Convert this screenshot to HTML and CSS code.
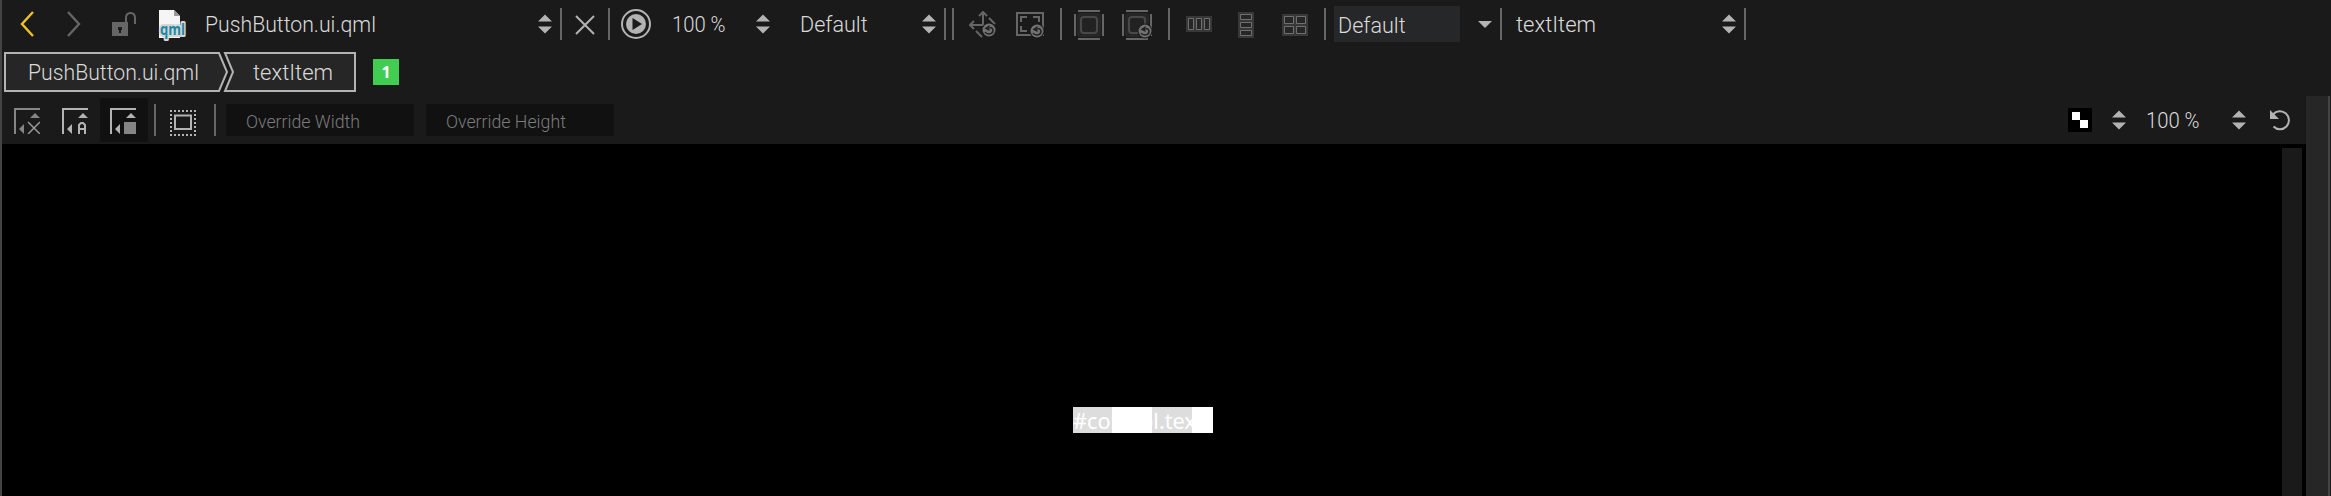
FILE: index.html
```html
<!DOCTYPE html>
<html lang="en">
<head>
<meta charset="utf-8">
<title>Form Editor</title>
<link rel="stylesheet" href="styles.css">
</head>
<body>
<svg width="0" height="0" class="defs">
  <defs>
    <symbol id="spin" viewBox="0 0 14 20"><path d="M0 7.500 7 .5 14 7.500ZM0 12.500 7 19.500 14 12.500Z" fill="#b3b3b3"/></symbol>
    <symbol id="reset" viewBox="0 0 16 16"><circle cx="8" cy="8" r="7.500" fill="#1a1a1a"/><circle cx="8" cy="8" r="6.500" fill="#727272"/><path d="M8.500 5.500Q12 5.500 12 8.500T8 12Q5 12 4 10" fill="none" stroke="#222" stroke-width="1.600"/><path d="M3.500 6.500 8.500 3V9Z" fill="#222"/></symbol>
  </defs>
</svg>
<div class="window">
  <header class="toolbar">
    <svg class="icon back" width="16" height="28"><path d="M14 2 3 14 14 26" fill="none" stroke="#f0c41b" stroke-width="2.400"/></svg>
    <svg class="icon forward" width="16" height="28"><path d="M2 2 13 14 2 26" fill="none" stroke="#666" stroke-width="2.400"/></svg>
    <svg class="icon lock" width="24" height="24"><path d="M0 10H16V24H0Z" fill="#666"/><path d="M14 11V6Q14 1 18.500 1T23 6V12" fill="none" stroke="#666" stroke-width="2"/><path d="M6 15H10V18H9V21H7V18H6Z" fill="#1a1a1a"/></svg>
    <svg class="icon file" width="30" height="32"><path d="M1 1H16L22 7V29H1Z" fill="#f5f5f5"/><path d="M16 1V7H22Z" fill="#999"/><text class="qml-mark" x="2" y="26" textLength="25" lengthAdjust="spacingAndGlyphs">qml</text></svg>
    <span class="label file-name"><span class="fit t-file">PushButton.ui.qml</span></span>
    <svg class="spin s1"><use href="#spin"/></svg>
    <i class="sep p1"></i>
    <svg class="icon close" width="20" height="20"><path d="M1 1 19 19M19 1 1 19" stroke="#b3b3b3" stroke-width="2"/></svg>
    <i class="sep p2"></i>
    <svg class="icon play" width="32" height="32"><circle cx="16" cy="16" r="14" fill="none" stroke="#b3b3b3" stroke-width="2"/><circle cx="16" cy="16" r="10" fill="#b3b3b3"/><path d="M12.500 10V22L22 16Z" fill="#1a1a1a"/></svg>
    <span class="label zoom"><span class="fit t-zoom">100 %</span></span>
    <svg class="spin s2"><use href="#spin"/></svg>
    <span class="label style"><span class="fit t-default">Default</span></span>
    <svg class="spin s3"><use href="#spin"/></svg>
    <i class="sep p3"></i><i class="sep p4"></i>
    <svg class="icon move" width="28" height="28"><g fill="none" stroke="#666" stroke-width="2"><path d="M1 14H14V1M5 10 1 14 5 18M10 5 14 1 18 5M20 7 26 13M7 20 13 26"/></g><use href="#reset" x="12" y="11" width="16" height="16"/></svg>
    <svg class="icon frame" width="28" height="28"><path d="M1 1H27V23H1Z" fill="none" stroke="#666" stroke-width="2"/><path d="M5 10V5H11M17 5H23V10M5 14V19H11" fill="none" stroke="#666" stroke-width="2"/><use href="#reset" x="13" y="11" width="16" height="16"/></svg>
    <i class="sep p5"></i>
    <svg class="icon snap" width="30" height="30"><rect x="3" y="3" width="24" height="24" rx="3" fill="#262626"/><rect x="7" y="7" width="16" height="16" rx="3" fill="#222" stroke="#484848" stroke-width="2"/><path d="M4 1H26M4 29H26M1 4V26M29 4V26" stroke="#666" stroke-width="2"/></svg>
    <svg class="icon snap-reset" width="30" height="30"><rect x="3" y="3" width="24" height="24" rx="3" fill="#262626"/><rect x="7" y="7" width="16" height="16" rx="3" fill="#222" stroke="#484848" stroke-width="2"/><path d="M4 1H26M4 29H26M1 4V26M29 4V26" stroke="#666" stroke-width="2"/><use href="#reset" x="15" y="13" width="16" height="16"/></svg>
    <i class="sep p6"></i>
    <svg class="icon row" width="26" height="16"><path d="M0 0H26V16H0Z" fill="#383838"/><path d="M2.500 2.500H7.500V13.500H2.500ZM10.500 2.500H15.500V13.500H10.500ZM18.500 2.500H23.500V13.500H18.500Z" fill="#262626" stroke="#707070"/></svg>
    <svg class="icon column" width="16" height="26"><path d="M0 0H16V26H0Z" fill="#383838"/><path d="M2.500 2.500H13.500V7.500H2.500ZM2.500 10.500H13.500V15.500H2.500ZM2.500 18.500H13.500V23.500H2.500Z" fill="#262626" stroke="#707070"/></svg>
    <svg class="icon grid" width="26" height="22"><path d="M0 0H26V22H0Z" fill="#383838"/><path d="M2.500 2.500H11.500V9.500H2.500ZM14.500 2.500H23.500V9.500H14.500ZM2.500 12.500H11.500V19.500H2.500ZM14.500 12.500H23.500V19.500H14.500Z" fill="#262626" stroke="#707070"/></svg>
    <i class="sep p7"></i>
    <span class="label combo"><span class="fit t-default">Default</span></span>
    <svg class="icon drop" width="14" height="8"><path d="M0 0H14L7 7Z" fill="#b3b3b3"/></svg>
    <i class="sep p8"></i>
    <span class="label item"><span class="fit t-item">textItem</span></span>
    <svg class="spin s4"><use href="#spin"/></svg>
    <i class="sep p9"></i>
  </header>
  <nav class="crumbs">
    <div class="trail">
      <svg class="outline" width="352" height="40"><g fill="#262626" stroke="#b3b3b3" stroke-width="2"><path d="M1 1H215L223 20 215 39H1Z"/><path d="M221 1H351V39H221L229 20Z"/></g></svg>
      <span class="label crumb-file"><span class="fit t-file">PushButton.ui.qml</span></span>
      <span class="label crumb-item"><span class="fit t-item">textItem</span></span>
    </div>
    <span class="badge">1</span>
  </nav>
  <div class="lower">
    <main class="editor">
      <div class="tools">
        <svg class="icon anchor" width="26" height="26"><path d="M0 0H26V2H2V26H0ZM16 10 21 5 26 10ZM10 16V26L5 21Z" fill="#858585"/><path d="M14 14 26 26M26 14 14 26" stroke="#999" stroke-width="1.500"/></svg>
        <svg class="icon anchor second" width="26" height="26"><path d="M0 0H26V2H2V26H0ZM16 10 21 5 26 10ZM10 16V26L5 21Z" fill="#b3b3b3"/><path d="M17 26V17L19 15H21L23 17V26M17 21H23" fill="none" stroke="#b3b3b3" stroke-width="2"/></svg>
        <span class="selected"><svg width="26" height="26"><path d="M0 0H26V2H2V26H0ZM16 10 21 5 26 10ZM10 16V26L5 21Z" fill="#b3b3b3"/><path d="M14 14H26V26H14Z" fill="#858585"/></svg></span>
        <i class="sep q1"></i>
        <svg class="icon bounds" width="26" height="26"><path d="M0 1H26M0 25H26" stroke="#b3b3b3" stroke-width="2" stroke-dasharray="2"/><path d="M1 0V26M25 0V26" stroke="#b3b3b3" stroke-width="2" stroke-dasharray="2"/><path d="M5 5.500H21V19H5Z" fill="none" stroke="#b3b3b3" stroke-width="2"/></svg>
        <i class="sep q2"></i>
        <span class="field width"><span class="fit t-hint">Override Width</span></span>
        <span class="field height"><span class="fit t-hint">Override Height</span></span>
        <span class="spacer"></span>
        <svg class="icon checker" width="24" height="24"><path d="M0 0H24V24H0Z"/><path d="M4 4H12V12H20V20H12V12H4Z" fill="#fff"/></svg>
        <svg class="spin s5"><use href="#spin"/></svg>
        <span class="label canvas-zoom"><span class="fit t-zoom">100 %</span></span>
        <svg class="spin s6"><use href="#spin"/></svg>
        <svg class="icon undo" width="22" height="22"><path d="M4 5.500A9 9 0 1 1 4.500 17.500" fill="none" stroke="#b3b3b3" stroke-width="2"/><path d="M1 1V10H10Z" fill="#b3b3b3"/></svg>
      </div>
      <div class="canvas">
        <div class="stage"><div class="text-item"><span class="fit t-control">#control.text</span></div></div>
        <div class="scrollbar"></div>
      </div>
    </main>
    <aside class="gutter"></aside>
  </div>
</div>
</body>
</html>
```
FILE: styles.css
```css
* { box-sizing: border-box; }
body { margin: 0; background: #1a1a1a; color: #dadada; font: 300 22px/28px Roboto, sans-serif; }
svg { display: block; }
.defs { position: absolute; }
.window { height: 496px; display: flex; flex-direction: column; border-left: 2px solid #444; border-right: 1px solid #1a1a1a; overflow: hidden; }
.toolbar { height: 50px; display: flex; align-items: flex-start; flex: none; }
.toolbar > *, .tools > * { flex: none; }
.label { white-space: nowrap; display: block; }
.fit { display: inline-block; white-space: nowrap; transform-origin: 0 50%; }
.t-file { transform: scaleX(.965); }
.t-zoom { transform: scaleX(.92); }
.t-default { transform: scaleX(.98); }
.t-hint { transform: scaleX(.985); }
.t-control { transform: scaleX(.985); }
.sep { width: 2px; height: 32px; margin-top: 8px; background: #666; }
.spin { width: 14px; height: 20px; margin-top: 14px; }

.back { margin: 10px 0 0 17px; }
.forward { margin: 10px 0 0 31px; }
.lock { margin: 12px 0 0 30px; }
.file { margin: 9px 0 0 22px; overflow: visible; }
.qml-mark { font: 700 16px "Open Sans", sans-serif; fill: #1b8aa5; stroke: #d5d5d5; stroke-width: 4px; paint-order: stroke; stroke-linejoin: round; }
.file-name { width: 333px; margin: 11px 0 0 17px; }
.p1 { margin-left: 8px; }
.close { margin: 15px 0 0 13px; }
.p2 { margin-left: 13px; }
.play { margin: 8px 0 0 10px; }
.zoom { width: 84px; margin: 11px 0 0 20px; }
.style { width: 122px; margin: 11px 0 0 30px; }
.p3 { margin-left: 8px; }
.p4 { margin-left: 6px; }
.move { margin: 11px 0 0 15px; }
.frame { margin: 12px 0 0 19px; overflow: visible; }
.p5 { margin-left: 16px; }
.snap { margin: 10px 0 0 12px; }
.snap-reset { margin: 10px 0 0 18px; overflow: visible; }
.p6 { margin-left: 16px; }
.row { margin: 16px 0 0 16px; }
.column { margin: 12px 0 0 26px; }
.grid { margin: 14px 0 0 28px; }
.p7 { margin-left: 16px; }
.combo { width: 126px; height: 36px; margin: 6px 0 0 8px; padding: 6px 0 0 4px; background: #262729; }
.drop { margin: 21px 0 0 18px; }
.p8 { margin-left: 8px; }
.item { width: 206px; margin: 11px 0 0 14px; }
.p9 { margin-left: 8px; }

.crumbs { height: 46px; display: flex; align-items: flex-start; flex: none; }
.trail { position: relative; width: 352px; height: 40px; margin: 2px 0 0 2px; display: flex; }
.outline { position: absolute; inset: 0; }
.trail .label { position: relative; margin-top: 7px; }
.crumb-file { width: 224px; padding-left: 24px; }
.crumb-item { padding-left: 25px; }
.badge { width: 26px; height: 26px; margin: 9px 0 0 17px; background: #41cd52; color: #fff; font: 700 16px/26px "Open Sans", sans-serif; text-align: center; }

.lower { flex: 1; min-height: 0; display: flex; }
.editor { flex: 1; display: flex; flex-direction: column; }
.tools { height: 48px; flex: none; display: flex; align-items: flex-start; }
.anchor { margin: 12px 0 0 12px; }
.anchor.second { margin-left: 22px; }
.selected { width: 48px; height: 44px; margin: 2px 0 0 12px; padding: 10px; background: #111; }
.q1 { margin-left: 6px; }
.bounds { margin: 14px 0 0 14px; }
.q2 { margin-left: 18px; }
.field { height: 32px; margin-top: 8px; padding: 0 20px; background: #111; color: #7c7c7c; font-size: 18px; line-height: 36px; }
.width { width: 188px; margin-left: 10px; }
.height { width: 188px; margin-left: 12px; }
.tools > .spacer { flex: 1; }
.checker { margin: 12px 20px 0 0; }
.canvas-zoom { width: 84px; margin: 11px 0 0 20px; }
.s6 { margin-left: 2px; }
.undo { margin: 13px 15px 0 23px; }
.canvas { flex: 1; display: flex; background: #000; }
.stage { flex: 1; padding: 263px 0 0 1071px; }
.text-item { width: 140px; height: 26px; color: #fff; font: 400 22px/26px "Noto Sans", sans-serif; background: linear-gradient(90deg, #ddd 39px, #fff 39px 79px, #ddd 79px 119px, #fff 119px); }
.scrollbar { width: 20px; margin: 4px 4px 0 0; background: #1a1a1a; }
.gutter { width: 24px; background: #262626; border-right: 2px solid #444; }
```
